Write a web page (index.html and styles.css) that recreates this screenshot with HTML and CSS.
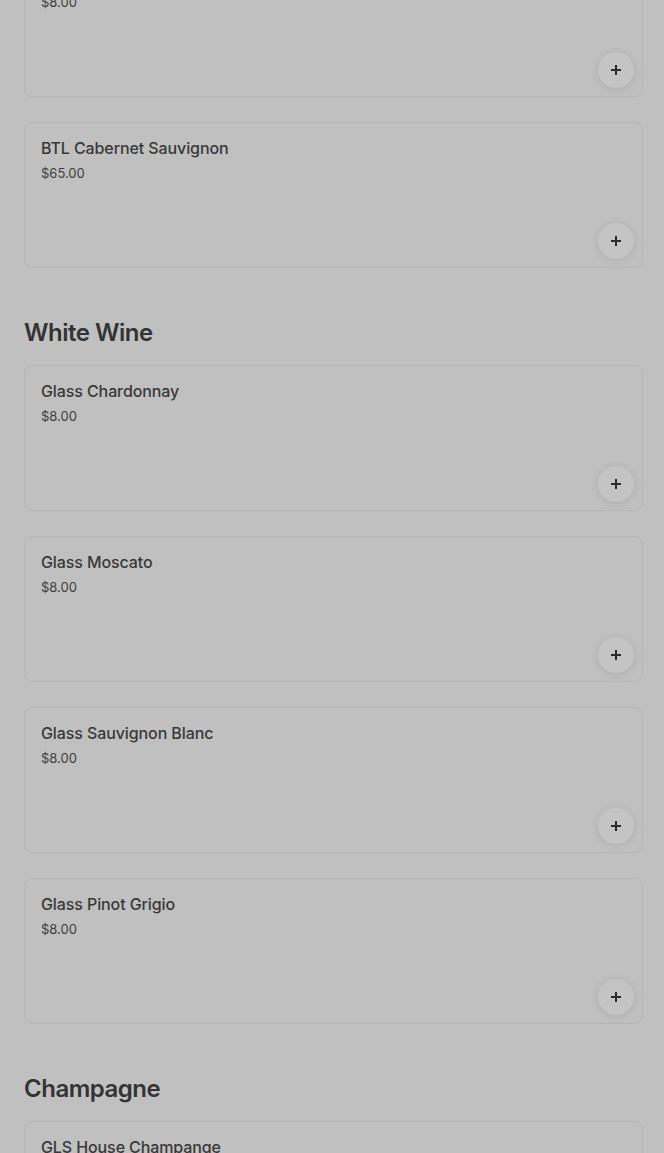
FILE: index.html
```html
<!DOCTYPE html>
<html lang="en">
<head>
    <meta charset="UTF-8">
    <meta name="viewport" content="width=device-width, initial-scale=1.0">
    <title>Menu</title>
    <link rel="stylesheet" href="styles.css">
</head>
<body>
    <div class="menu">
        <section class="category first">
            <div class="items">
                <div class="item">
                    <div class="name">Glass Merlot</div>
                    <div class="price">$8.00</div>
                    <button class="add"><svg viewBox="0 0 12 12" width="12" height="12"><path d="M6 1v10M1 6h10" stroke="#2b2b2b" stroke-width="2"/></svg></button>
                </div>
                <div class="item">
                    <div class="name">BTL Cabernet Sauvignon</div>
                    <div class="price">$65.00</div>
                    <button class="add"><svg viewBox="0 0 12 12" width="12" height="12"><path d="M6 1v10M1 6h10" stroke="#2b2b2b" stroke-width="2"/></svg></button>
                </div>
            </div>
        </section>

        <section class="category">
            <h2>White Wine</h2>
            <div class="items">
                <div class="item">
                    <div class="name">Glass Chardonnay</div>
                    <div class="price">$8.00</div>
                    <button class="add"><svg viewBox="0 0 12 12" width="12" height="12"><path d="M6 1v10M1 6h10" stroke="#2b2b2b" stroke-width="2"/></svg></button>
                </div>
                <div class="item">
                    <div class="name">Glass Moscato</div>
                    <div class="price">$8.00</div>
                    <button class="add"><svg viewBox="0 0 12 12" width="12" height="12"><path d="M6 1v10M1 6h10" stroke="#2b2b2b" stroke-width="2"/></svg></button>
                </div>
                <div class="item">
                    <div class="name">Glass Sauvignon Blanc</div>
                    <div class="price">$8.00</div>
                    <button class="add"><svg viewBox="0 0 12 12" width="12" height="12"><path d="M6 1v10M1 6h10" stroke="#2b2b2b" stroke-width="2"/></svg></button>
                </div>
                <div class="item">
                    <div class="name">Glass Pinot Grigio</div>
                    <div class="price">$8.00</div>
                    <button class="add"><svg viewBox="0 0 12 12" width="12" height="12"><path d="M6 1v10M1 6h10" stroke="#2b2b2b" stroke-width="2"/></svg></button>
                </div>
            </div>
        </section>

        <section class="category">
            <h2>Champagne</h2>
            <div class="items">
                <div class="item">
                    <div class="name">GLS House Champange</div>
                    <div class="price">$9.00</div>
                    <button class="add"><svg viewBox="0 0 12 12" width="12" height="12"><path d="M6 1v10M1 6h10" stroke="#2b2b2b" stroke-width="2"/></svg></button>
                </div>
            </div>
        </section>
    </div>
</body>
</html>
```

FILE: styles.css
```css
body {
    margin: 0;
    padding: 0;
    font-family: Inter, "Noto Sans", Arial, sans-serif;
    background-color: #c0c0c0;
    color: #333;
    overflow: hidden;
}

.menu {
    padding: 0 21px 0 24px;
    margin-top: -49px;
}

.category {
    margin-top: 49px;
}

.category.first {
    margin-top: 0;
}

h2 {
    margin: 0 0 16px 0;
    font-size: 24px;
    line-height: 32px;
    font-weight: 600;
    letter-spacing: -0.5px;
    color: #333;
}

.items {
    display: flex;
    flex-direction: column;
    gap: 25px;
}

.item {
    box-sizing: border-box;
    height: 146px;
    display: flex;
    flex-direction: column;
    padding: 14px 8px 8px 16px;
    border: 1px solid #b5b5b5;
    border-radius: 8px;
}

.name {
    font-size: 16px;
    line-height: 22px;
    font-weight: 500;
    letter-spacing: -0.1px;
    color: #383838;
}

.price {
    margin-top: 4px;
    font-size: 13px;
    line-height: 20px;
    color: #3d3d3d;
}

.add {
    margin-top: auto;
    align-self: flex-end;
    width: 36px;
    height: 36px;
    padding: 0;
    border: none;
    border-radius: 50%;
    background-color: #c4c4c4;
    box-shadow: 0 1px 8px rgba(0,0,0,0.1);
    display: flex;
    align-items: center;
    justify-content: center;
}
```
